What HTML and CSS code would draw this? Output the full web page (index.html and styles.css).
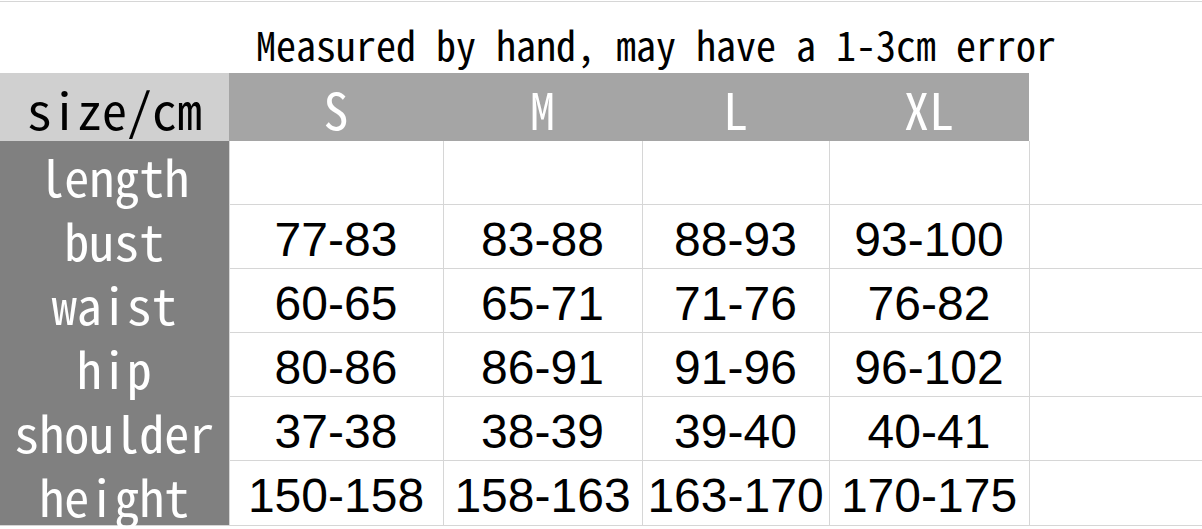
FILE: index.html
```html
<!DOCTYPE html>
<html>
<head>
<meta charset="utf-8">
<link rel="stylesheet" href="styles.css">
</head>
<body>
<table class="chart">
  <colgroup>
    <col class="c-label">
    <col class="c-s">
    <col class="c-m">
    <col class="c-l">
    <col class="c-xl">
    <col class="c-extra">
  </colgroup>
  <tr class="title-row">
    <td colspan="6" class="title">Measured by hand, may have a 1-3cm error</td>
  </tr>
  <tr class="head-row">
    <th class="corner">size/cm</th>
    <th class="size">S</th>
    <th class="size">M</th>
    <th class="size">L</th>
    <th class="size">XL</th>
    <td class="extra-head"></td>
  </tr>
  <tr class="row first">
    <th class="label">length</th>
    <td></td><td></td><td></td><td></td><td class="extra"></td>
  </tr>
  <tr class="row">
    <th class="label">bust</th>
    <td>77-83</td><td>83-88</td><td>88-93</td><td>93-100</td><td class="extra"></td>
  </tr>
  <tr class="row">
    <th class="label">waist</th>
    <td>60-65</td><td>65-71</td><td>71-76</td><td>76-82</td><td class="extra"></td>
  </tr>
  <tr class="row">
    <th class="label">hip</th>
    <td>80-86</td><td>86-91</td><td>91-96</td><td>96-102</td><td class="extra"></td>
  </tr>
  <tr class="row">
    <th class="label">shoulder</th>
    <td>37-38</td><td>38-39</td><td>39-40</td><td>40-41</td><td class="extra"></td>
  </tr>
  <tr class="row last">
    <th class="label">height</th>
    <td>150-158</td><td>158-163</td><td>163-170</td><td>170-175</td><td class="extra"></td>
  </tr>
</table>
</body>
</html>
```
FILE: styles.css
```css
html, body {
  margin: 0;
  padding: 0;
  background: #ffffff;
}

.chart {
  border-collapse: collapse;
  table-layout: fixed;
  width: 1202px;
  margin-top: 1px;
  border-top: 1px solid #d6d6d6;
}

.c-label { width: 229px; }
.c-s { width: 214px; }
.c-m { width: 199px; }
.c-l { width: 187px; }
.c-xl { width: 200px; }
.c-extra { width: 173px; }

.chart td,
.chart th {
  padding: 0;
  font-weight: normal;
  text-align: center;
  vertical-align: middle;
  white-space: nowrap;
  line-height: 1;
}

.title-row {
  height: 71px;
}

.title {
  font-family: "Noto Sans Mono CJK SC", "DejaVu Sans Mono", monospace;
  font-size: 40px;
  color: #000;
  padding-left: 110px !important;
  padding-top: 14px !important;
}

.head-row {
  height: 68px;
}

.corner {
  background: #d0d0d0;
  font-family: "Noto Sans Mono CJK SC", "DejaVu Sans Mono", monospace;
  font-size: 50px;
  color: #000;
  padding-top: 2px !important;
}

.size {
  background: #a5a5a5;
  font-family: "Noto Sans Mono CJK SC", "DejaVu Sans Mono", monospace;
  font-size: 50px;
  color: #fff;
  padding-top: 2px !important;
}

.row {
  height: 64px;
}

.label {
  background: #808080;
  color: #fff;
  font-family: "Noto Sans Mono CJK SC", "DejaVu Sans Mono", monospace;
  font-size: 50px;
  padding-top: 4px !important;
}

.row td {
  border: 1px solid #d6d6d6;
  font-family: "Liberation Sans", Arial, sans-serif;
  font-size: 48px;
  color: #000;
  padding-top: 6px;
}

.row td.extra {
  border-right: none;
}

.row.first td {
  border-top: none;
}

.row.last {
  height: 65px;
}

.row.last th {
  border-bottom: 1px solid #d6d6d6;
}
```
